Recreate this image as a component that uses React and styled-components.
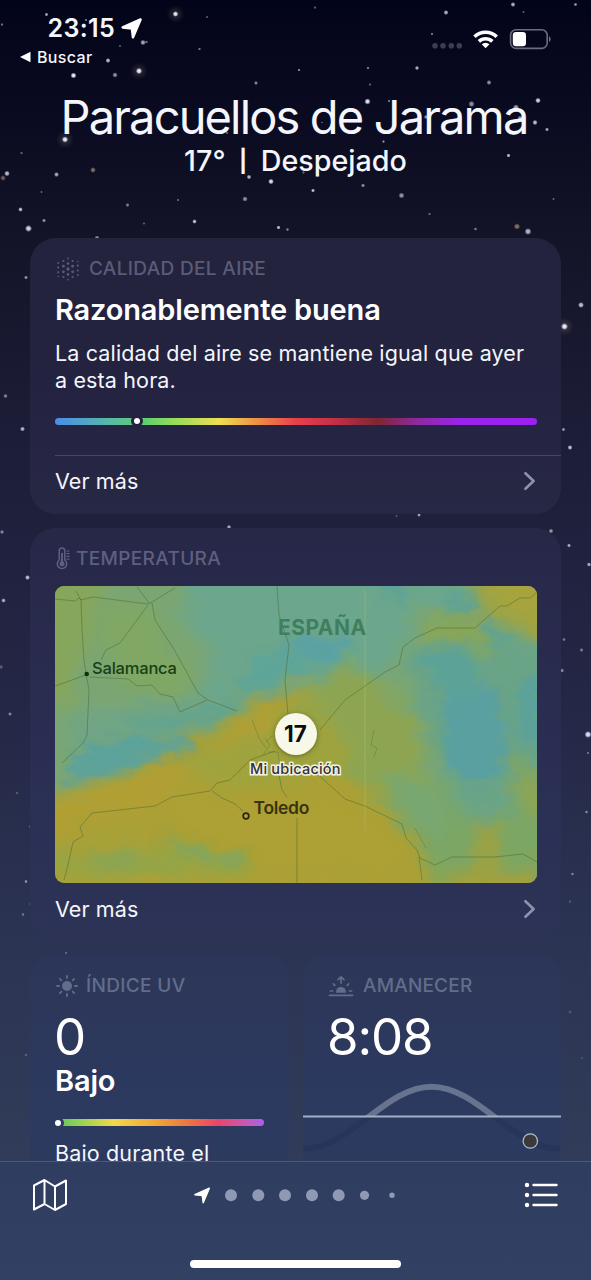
import React from "react";
import styled, { createGlobalStyle } from "styled-components";

const GlobalStyle = createGlobalStyle`
  * { box-sizing: border-box; }
  body { margin: 0; background: #30405f; }
`;

const Screen = styled.div`
  position: relative;
  display: flex;
  flex-direction: column;
  width: 591px;
  height: 1280px;
  overflow: hidden;
  font-family: Inter, sans-serif;
  color: #f4f6fc;
  background: linear-gradient(180deg, #02041a 0, #0a0b20 120px, #131428 238px, #1a1b33 380px, #1f203c 520px, #242745 700px, #2a3150 880px, #2e3856 1040px, #303c59 1160px);
`;

const Sky = styled.svg`
  position: absolute;
  inset: 0;
`;

const StatusBar = styled.header`
  position: relative;
  display: flex;
  justify-content: space-between;
  height: 90px;
  padding: 14px 40px 0 20px;
`;

const StatusLeft = styled.div`
  display: flex;
  flex-direction: column;
`;

const Time = styled.div`
  display: flex;
  align-items: center;
  gap: 6px;
  height: 28px;
  padding-left: 27.5px;
  font-size: 25px;
  font-weight: 600;
  letter-spacing: 0.35px;
`;

const BackLink = styled.div`
  display: flex;
  align-items: center;
  gap: 6px;
  height: 29px;
  font-size: 16px;
  font-weight: 500;
  letter-spacing: 0.35px;
`;

const StatusRight = styled.div`
  display: flex;
  align-items: center;
  height: 50px;
`;

const Hero = styled.section`
  position: relative;
  display: flex;
  flex-direction: column;
  align-items: center;
  height: 148px;
  white-space: nowrap;
`;

const City = styled.h1`
  margin: -1px 0 0;
  padding-right: 3px;
  font-size: 47px;
  font-weight: 400;
  line-height: 56px;
  letter-spacing: -1.85px;
`;

const Conditions = styled.div`
  display: flex;
  align-items: center;
  gap: 13.5px;
  font-size: 28.7px;
  font-weight: 500;
  line-height: 32px;
`;

const Divider = styled.span`
  font-size: 22px;
  font-weight: 700;
`;

const Cards = styled.main`
  position: relative;
  display: flex;
  flex-direction: column;
  gap: 14px;
  height: 924px;
  padding: 0 30px;
  overflow: hidden;
`;

const Card = styled.section`
  display: flex;
  flex-direction: column;
  flex: none;
  height: ${(p) => p.$height};
  padding: 0 25px;
  border-radius: 26px;
  background: ${(p) => p.$fill};
  white-space: nowrap;
  overflow: hidden;
`;

const Pair = styled.div`
  display: grid;
  grid-template-columns: 259px 258px;
  gap: 14px;
`;

const Label = styled.div`
  display: flex;
  align-items: center;
  gap: ${(p) => p.$gap || "9px"};
  height: 24px;
  margin-top: 19px;
  font-size: 19px;
  font-weight: 500;
  letter-spacing: ${(p) => p.$track || "0.35px"};
  color: ${(p) => p.$tone || "#5a5c77"};
`;

const Headline = styled.h2`
  margin: ${(p) => p.$margin || "0"};
  font-size: 29px;
  font-weight: 600;
  line-height: 36px;
  letter-spacing: -0.17px;
  color: #fff;
`;

const Body = styled.p`
  margin: ${(p) => p.$margin};
  font-size: 21.5px;
  line-height: 27.3px;
  letter-spacing: 0.14px;
`;

const Reading = styled.div`
  font-size: 51px;
  font-weight: 400;
  line-height: 60px;
  margin-top: 9px;
  margin-left: -1px;
  letter-spacing: -1.1px;
  color: #fff;
`;

const Scale = styled.div`
  display: flex;
  align-items: center;
  flex: none;
  width: ${(p) => p.$width};
  height: 7px;
  margin-top: ${(p) => p.$top};
  padding-left: ${(p) => p.$offset};
  border-radius: 4px;
  background: ${(p) => p.$ramp};
`;

const ScaleDot = styled.i`
  width: 12px;
  height: 12px;
  margin-left: ${(p) => p.$shift || "0"};
  border: 3px solid ${(p) => p.$ring};
  border-radius: 50%;
  background: #fff;
`;

const More = styled.div`
  display: flex;
  align-items: center;
  justify-content: space-between;
  height: 52px;
  margin-top: ${(p) => p.$top || "0"};
  margin-right: -25px;
  padding-right: 25px;
  border-top: ${(p) => (p.$line ? "1px solid #454660" : "0")};
  font-size: 21.5px;
  letter-spacing: 0.1px;
`;

const MapView = styled.div`
  position: relative;
  flex: none;
  width: 482px;
  height: 297px;
  margin-top: 15px;
  border-radius: 9px;
  overflow: hidden;
`;

const MapLabel = styled.span`
  position: absolute;
  left: ${(p) => p.$x}px;
  top: ${(p) => p.$y}px;
  font-size: ${(p) => p.$size}px;
  font-weight: ${(p) => p.$weight || 500};
  line-height: 20px;
  letter-spacing: ${(p) => p.$track || 0}px;
  color: ${(p) => p.$color};
`;

const LocationLabel = styled(MapLabel)`
  -webkit-text-stroke: 3px #f3f1e0;
  paint-order: stroke fill;
`;

const LocationPin = styled.div`
  position: absolute;
  left: 219.5px;
  top: 127.5px;
  width: 42px;
  height: 42px;
  border-radius: 50%;
  background: #f7f7ea;
  color: #0c0c0c;
  font-size: 22.5px;
  font-weight: 700;
  line-height: 42px;
  text-align: center;
  letter-spacing: 0;
  box-shadow: 0 1px 5px rgba(60, 70, 10, 0.6);
`;

const SunPath = styled.svg`
  display: block;
  flex: none;
  margin: 9px 0 0 -25px;
`;

const TabBar = styled.footer`
  position: relative;
  display: flex;
  flex-direction: column;
  height: 119px;
  border-top: 1px solid #4b5a7c;
  background: linear-gradient(180deg, #2f3d61, #324063);
`;

const TabRow = styled.div`
  display: flex;
  align-items: center;
  justify-content: space-between;
  height: 66px;
  padding: 0 33px 0 32px;
`;

const HomeIndicator = styled.div`
  width: 211px;
  height: 8px;
  margin: 32px auto 0;
  border-radius: 4px;
  background: #fff;
`;

const stars = [
  [46.5,14.5,1.2,.7],[175.5,14,1.8,1,1],[2,24.5,1,.5],[207,17,.8,.4],[86,20,1,.5],[143,42.5,1.8,.7],[146.5,42,1,.5],[120,46,.8,.4],[199.5,49,1,.5],[108,60.5,1.6,.8],[139,71,2,1,1],[73.5,75.5,1.9,1],[115,75,1.7,.6],[299,70,1,.6],[256,83,1.3,.6],
  [65,139.5,2,1,1],[21.5,153,1,.4],[7,173.5,1.8,.8],[3,178,1.8,.5,2],[56.5,174.5,1.6,.7],[93,170,1.8,.6,2],[41.5,192,.9,.4],[20.5,209.5,1.5,.8],[44,220.5,1.3,.6],[28.5,228.5,2.2,.9],[127.5,205,1.3,.5],[178,200,.9,.4],[144,223.5,.9,.4],[194.5,221.5,1.5,.8],[249,177,1.5,.8],[271,181.5,1.8,.95],[245,199,1.7,.6],[278.5,227.5,1.3,.8],[287.5,229.5,1.1,.5],[227,133,1,.4],
  [315,7.5,1,.4],[446,12.5,1.6,.75],[513,4.5,1.6,.75],[523.5,12,.9,.4],[575.5,4.5,1.2,.6],[432,34,1,.5],[368,68,1.1,.5],[417,68,1.4,.75],[370,84.5,1,.4],[489,82.5,1.6,.6],[367.5,101.5,2,.95],[389,101,1,.5],[471.5,104,2,.6],[538,100.5,1.8,.9],[516,107.5,2,.7],[520,118,1.6,.6],[426,117,1.4,.6],[535,122.5,1.7,.8],[547,129.5,1.3,.7],[322,122.5,.7,.4],[383.5,141.5,1,.6],[508.5,155.5,1.3,.8],[303.5,172.5,1,.4],[313,190.5,1.3,.8],[363,185.5,1.3,.6],[401.5,195.5,1.9,.6],[429.5,214,1,.4],[475.5,229,1.1,.5],[517,226.5,2,.6,2],[528,231.5,2.2,.75],[553.5,199,.9,.4],
  [97,238,1.6,.6],[26,277.5,1.3,.6],[5.5,396,1.4,.5],[22.5,429,1.6,.75],[581,305,1.9,.8],[564.5,326.5,2.2,1,1],[563.5,429.5,1.2,.6],[570,447.5,1.6,.8],[396.5,516,.9,.3],[419,515,1.2,.7],[229,527,1.4,.7],[2,532,1.4,.5],[27.5,577.5,1.6,.8],[3.5,600.5,1.5,.7],[1,667,1.4,.3],[10,714,1.3,.5],[551,531,1.5,.6],[569,545.5,1.3,.7],[589,564.5,1.4,.7],[564,639.5,1.2,.4],[581.5,650,1.3,.45],[562,670.5,1.4,.5],[588,734.5,2.2,.95],[588,753,1,.4],[586.5,812,1.1,.5],[572.5,874,1.1,.45],[570,901.5,1,.25],[17,793,1.1,.25],[30,826.5,1,.3],[26,881.5,1.1,.6],[30,904,1,.2],[23,914.5,1.1,.4],[66,953,1,.3],[26,1055,1.1,.25],[570,1012,1.2,.2],[582,1058,1.1,.15],
];

const Stars = () => (
  <Sky width="591" height="1280" viewBox="0 0 591 1280">
    <defs>
      <radialGradient id="glow">
        <stop offset="0" stopColor="#a08c78" stopOpacity=".28" />
        <stop offset="1" stopColor="#a08c78" stopOpacity="0" />
      </radialGradient>
      <radialGradient id="star">
        <stop offset="0" stopColor="#fff" />
        <stop offset=".5" stopColor="#e6eaff" stopOpacity=".85" />
        <stop offset="1" stopColor="#cdd4f5" stopOpacity="0" />
      </radialGradient>
      <radialGradient id="warmStar">
        <stop offset="0" stopColor="#e0b49a" />
        <stop offset=".5" stopColor="#e0b49a" stopOpacity=".8" />
        <stop offset="1" stopColor="#e0b49a" stopOpacity="0" />
      </radialGradient>
    </defs>
    {stars.map(([x, y, r, o, kind], i) => (
      <g key={i}>
        {kind === 1 && <circle cx={x} cy={y} r="9" fill="url(#glow)" />}
        <circle cx={x} cy={y} r={r * 1.6} opacity={o} fill={kind === 2 ? "url(#warmStar)" : "url(#star)"} />
      </g>
    ))}
  </Sky>
);

const ARROW = "M18.6 1.4 11.4 18.4 10.4 9.9 1.6 9Z";

const Arrow = () => (
  <svg width="21" height="21" viewBox="0 0 20 20">
    <path d={ARROW} fill="#fff" stroke="#fff" strokeWidth="2.4" strokeLinejoin="round" />
  </svg>
);

const StatusIcons = () => (
  <svg width="120" height="22" viewBox="431 28 120 22">
    {[435, 443, 451.3, 459.3].map((x) => (
      <circle key={x} cx={x} cy="45.8" r="2.8" fill="#3c3d52" />
    ))}
    <g fill="none" stroke="#fff" strokeWidth="3.6">
      <path d="M474.5 36.8a16 16 0 0 1 22.2 0" />
      <path d="M478.9 41.4a9.7 9.7 0 0 1 13.4 0" />
    </g>
    <path d="M485.6 48.3 481.7 44.3a5.6 5.6 0 0 1 7.8 0Z" fill="#fff" />
    <rect x="510.6" y="29.8" width="36.6" height="18.6" rx="5.5" fill="none" stroke="#6b6c7d" strokeWidth="1.6" />
    <path d="M549 36.2c2.2.8 2.2 5 0 5.8Z" fill="#6b6c7d" />
    <rect x="512.8" y="32" width="13.2" height="14.2" rx="3.2" fill="#fff" />
  </svg>
);

const Chevron = () => (
  <svg width="13" height="20" viewBox="0 0 13 20">
    <path d="M2.4 2.2 10.6 10 2.4 17.8" fill="none" stroke="#8f92ad" strokeWidth="2.6" strokeLinecap="round" strokeLinejoin="round" />
  </svg>
);

const airDots = [
  [12, [[-10.6, 0.9], [-5.4, 1.3], [0, 1.7], [5.4, 1.3], [10.6, 0.9]]],
  [7.4, [[-8, 1.1], [-2.8, 1.4], [2.8, 1.4], [8, 1.1]]],
  [16.6, [[-8, 1.1], [-2.8, 1.4], [2.8, 1.4], [8, 1.1]]],
  [2.2, [[-6, 0.9], [-1.5, 1.1], [3.3, 1.1], [7.5, 0.8]]],
  [21.8, [[-7.5, 0.8], [-3.3, 1.1], [1.5, 1.1], [6, 0.9]]],
];
const AirIcon = () => (
  <svg width="25" height="24" viewBox="-1 0 25 24" fill="currentColor">
    {airDots.flatMap(([x, col]) => col.map(([dy, r]) => <circle key={`${x},${dy}`} cx={x} cy={12 + dy} r={r} />))}
  </svg>
);

const ThermoIcon = () => (
  <svg width="16" height="23" viewBox="0 0 16 23" fill="none" stroke="currentColor" strokeWidth="1.5">
    <path d="M4.2 13V3.9a2.8 2.8 0 0 1 5.6 0v9.1a4.7 4.7 0 1 1-5.6 0Z" />
    <path d="M7 6v10" strokeWidth="1.9" />
    <circle cx="7" cy="16.8" r="2.5" fill="currentColor" stroke="none" />
    <path d="M11.5 4h3M11.5 6.7h3M11.5 9.4h3M11.5 12.1h3" strokeWidth="1.2" />
  </svg>
);

const SunIcon = () => (
  <svg width="24" height="24" viewBox="-12 -12 24 24" stroke="currentColor" strokeWidth="1.8" strokeLinecap="round">
    <circle r="5" fill="currentColor" stroke="none" />
    {[0, 45, 90, 135, 180, 225, 270, 315].map((a) => (
      <path key={a} d="M0-8V-10" transform={`rotate(${a})`} />
    ))}
  </svg>
);

const SunriseIcon = () => (
  <svg width="26" height="24" viewBox="0 0 26 24" fill="none" stroke="currentColor" strokeWidth="1.7" strokeLinecap="round" strokeLinejoin="round">
    <path d="M1.6 21.4h23" strokeWidth="1.9" />
    <path d="M8.1 18.7v-.9a4.9 4.9 0 0 1 9.8 0v.9Z" fill="currentColor" stroke="none" />
    <path d="M13 9V3.3M10 5.6l3-2.7 3 2.7M6.8 11.3 5.4 9.9M19.2 11.3l1.4-1.4M4.6 17H2.4M21.4 17h2.2" />
  </svg>
);

/* Temperature bands, painted in order; units are thirds of a pixel. */
const bands = [
  ["#7ba673", "-60-60H1560V1000H1180L1100 760 1010 650 930 520 900 420 830 330 740 320 640 370 560 410 480 450 380 500 250 570 60 650-60 660Z"],
  ["#86a65c", "-60-60H120L160 60 110 200 60 380-60 420Z"],
  ["#80a763", "160 100 300 90 340 200 420 330 330 370 200 300 150 210Z"],
  ["#6ca68c", "420-60H1240L1220 120 1060 200 1000 280 880 300 700 330 560 390 420 400 500 260 400 120Z"],
  ["#70a585", "60 420 300 380 520 380 500 440 300 510 60 580Z"],
  ["#8da552", "760 330 900 270 1000 330 1080 400 1130 500 1130 660 1090 760 1000 690 900 620 800 520 740 430Z"],
  ["#6aa487", "1060 230 1250 180 1500 210V700L1260 740 1180 620 1130 480 1090 360Z"],
  ["#7ca663", "1080 600 1180 640 1250 740 1500 700V960H1160L1100 800 1020 720Z"],
  ["#78a772", "980 600 1080 590 1200 700 1180 800 1060 720Z"],
  ["#8ba655", "1080 130 1230 110 1330 200 1340 240 1230 190 1100 200Z"],
  ["#a0a442", "1250 20 1560-40V200L1420 190 1370 130 1270 150 1310 80Z"],
  ["#a8a43c", "1330 20 1470 20V130L1380 90Z"],
  ["#93a548", "560 900 0 900 0 830 150 860 320 820 620 850Z"],
  ["#b19f34", "-40 680 60 645 250 590 420 545 540 480 560 440 660 370 760 360 700 430 620 470 540 560 380 610 320 700 160 720-40 800Z"],
  ["#9fa33e", "380 540 540 510 640 480 700 400 860 440 900 560 720 620 500 640 440 600Z"],
  ["#ada034", "330 660 600 650 900 680 1050 780 1080 880 640 880 420 780Z"],
  ["#89a554", "120 830 210 810 300 850 250 890 120 890Z"],
  ["#a5a03a", "1285 730 1340 740 1345 900 1460 870V960H1180V900L1300 880Z"],
  ["#8ca553", "1380 540 1500 640V720L1400 700Z"],
];
const cool = [
  ["#57a1ab", "730 190 890 185 890 230 830 270 740 265 690 250Z"],
  ["#5ba59c", "600 260 700 210 830 260 700 300 660 350 560 380Z"],
  ["#5ca497", "240 430 380 420 560 385 550 420 440 440 380 460 250 450Z"],
  ["#56a2a4", "80 540 220 490 400 480 440 520 300 560 130 610 50 630Z"],
  ["#569fa8", "1180 350 1330 330 1370 460 1350 600 1260 640 1190 560Z"],
  ["#5aa29c", "1100 240 1240 210 1290 320 1250 380 1160 330Z"],
  ["#5ba29b", "1200 60 1280 50 1270 120 1210 120ZM1300 130 1350 150 1380 230 1310 200ZM1000 30 1080 40 1060 80 990 70Z"],
  ["#58a1a0", "1410 330 1470 300V550L1400 480Z"],
  ["#7ba767", "320 790 440 800 500 840 580 830 600 870 480 860 380 830Z"],
];

const Terrain = () => (
  <svg width="482" height="297" viewBox="55 586 482 297">
    <defs>
      <filter id="soften" x="-5%" y="-5%" width="110%" height="110%" colorInterpolationFilters="sRGB">
        <feGaussianBlur stdDeviation="8" result="b" />
        <feTurbulence type="fractalNoise" baseFrequency=".03 .05" numOctaves="4" seed="8" result="n" />
        <feDisplacementMap in="b" in2="n" scale="26" xChannelSelector="R" yChannelSelector="G" />
      </filter>
      <filter id="wisp" x="-5%" y="-10%" width="110%" height="120%" colorInterpolationFilters="sRGB">
        <feGaussianBlur stdDeviation="4.5" result="b" />
        <feTurbulence type="fractalNoise" baseFrequency=".05 .09" numOctaves="4" seed="3" result="n" />
        <feDisplacementMap in="b" in2="n" scale="26" xChannelSelector="R" yChannelSelector="G" />
      </filter>
    </defs>
    <rect x="55" y="586" width="482" height="297" fill="#aaa136" />
    <g filter="url(#soften)">
      <g transform="translate(50 575) scale(.33333)">
        {bands.map(([c, d], i) => <path key={i} d={`M${d}`} fill={c} />)}
      </g>
    </g>
    <g filter="url(#wisp)" opacity=".78">
      <g transform="translate(50 575) scale(.33333)">
        {cool.map(([c, d], i) => <path key={i} d={`M${d}`} fill={c} />)}
      </g>
    </g>
    <g fill="none" stroke="#4c6a35" strokeOpacity=".5" strokeWidth="1" strokeLinejoin="round">
      <path d="M55 599 75 601 79 598 81 600 93 597 148 604 152 602 175 588M137 587 149 603M76 591 81 600M148 605 120 643 106 650 101 660M152 603 155 620 175 651 198 693 208 700 237 711" />
      <path d="M81 600 82 630 84 660 86 674 89 690 87 735 83 743 62 763M55 686 86 675M90 677 128 679 137 686 152 685 160 694 173 697 180 712 207 700" />
      <path d="M277 586 279 615 289 645 285 680 288 715M320 730 345 700 385 672 399 665 403 647 415 638 437 628 475 628 500 606 507 606 520 598 530 598 537 592" />
      <path d="M64 880 68 865 73 842 83 836 80 827 92 813 155 806 172 797 210 791 217 783 230 780 250 760 275 751M212 791 222 798 235 804 243 811M279 775 282 790 287 797M297 818V883" />
      <path d="M315 772 345 799 365 806 402 824 406 838 417 850 420 858 435 865 452 857 495 857 523 854 537 862M419 857 422 880" />
      <path d="M252 720 259 738 266 748M265 738 270 745 263 755M266 742 272 736M268 752 278 752 281 775M415 828 426 848M374 730 371 745 377 748 374 757" strokeOpacity=".35" />
    </g>
    <path d="M365 590V830" stroke="#b5c37a" strokeOpacity=".4" />
    <circle cx="86.7" cy="674" r="2.3" fill="#0e3509" />
    <circle cx="246" cy="816" r="2.8" fill="#b3a83c" stroke="#2c270a" strokeWidth="1.8" />
  </svg>
);

const DaylightCurve = () => (
  <SunPath width="258" height="76" viewBox="303 1076 258 76">
    <defs>
      <clipPath id="day"><rect x="303" y="1076" width="258" height="41" /></clipPath>
      <clipPath id="night"><rect x="303" y="1117" width="258" height="34.5" /></clipPath>
    </defs>
    <path clipPath="url(#night)" d="M303 1149c47 0 82-62.3 128.5-62.3s82 62.3 128.5 62.3" fill="none" stroke="#26365a" strokeWidth="6" />
    <path clipPath="url(#day)" d="M303 1149c47 0 82-62.3 128.5-62.3s82 62.3 128.5 62.3" fill="none" stroke="#67738f" strokeWidth="6" />
    <path d="M303 1116.5H561" stroke="#a3aec5" strokeWidth="1.8" />
    <circle cx="530.3" cy="1141" r="7.2" fill="#3a3a3c" stroke="#b9bfca" strokeWidth="1.2" />
  </SunPath>
);

const MapIcon = () => (
  <svg width="36" height="34" viewBox="0 0 36 34" fill="none" stroke="#fff" strokeWidth="2" strokeLinejoin="round">
    <path d="M2 7.5 12.5 2 23 8.5 34 2.5V26L23 32 12.5 26 2 31.5ZM12.5 2V26M23 8.5V32" />
  </svg>
);

const PageDots = styled.svg`
  margin-left: -2px;
`;

const Pages = () => (
  <PageDots width="206" height="18" viewBox="192 1186 206 18">
    <svg x="193.5" y="1187" width="17" height="17" viewBox="0 0 20 20">
      <path d={ARROW} fill="#fff" stroke="#fff" strokeWidth="1.8" strokeLinejoin="round" />
    </svg>
    {[[231, 6], [258.3, 6], [285, 6], [312, 6], [338.7, 6], [364.5, 4.6], [392, 2.7]].map(([x, r]) => (
      <circle key={x} cx={x} cy="1195.3" r={r} fill="#8f99b3" />
    ))}
  </PageDots>
);

const ListIcon = () => (
  <svg width="34" height="26" viewBox="524 1182.5 34 26">
    {[1185.5, 1195.5, 1205.5].map((y) => (
      <g key={y}>
        <circle cx="527" cy={y} r="2.2" fill="#fff" />
        <path d={`M533.5 ${y}H556.5`} stroke="#fff" strokeWidth="2.4" strokeLinecap="round" />
      </g>
    ))}
  </svg>
);

export default function App() {
  return (
    <Screen>
      <GlobalStyle />
      <Stars />
      <StatusBar>
        <StatusLeft>
          <Time>23:15 <Arrow /></Time>
          <BackLink>
            <svg width="11" height="12" viewBox="0 0 11 12"><path d="M0 6 10.5 .8V11.2Z" fill="#fff" /></svg>
            Buscar
          </BackLink>
        </StatusLeft>
        <StatusRight><StatusIcons /></StatusRight>
      </StatusBar>
      <Hero>
        <City>Paracuellos de Jarama</City>
        <Conditions>17° <Divider>|</Divider> Despejado</Conditions>
      </Hero>
      <Cards>
        <Card $height="276px" $fill="linear-gradient(180deg, #24233d, #232341 50%, #272844)">
          <Label><AirIcon />CALIDAD DEL AIRE</Label>
          <Headline $margin="11px 0 0">Razonablemente buena</Headline>
          <Body $margin="12px 0 0">La calidad del aire se mantiene igual que ayer<br />a esta hora.</Body>
          <Scale
            $width="482px" $top="23.4px" $offset="76px"
            $ramp="linear-gradient(90deg, #4a8de8 0, #55b9a8 11%, #62cf6e 19%, #8fdc5a 24%, #eedf53 34%, #ee8f45 42%, #e93f4c 50%, #c93248 57%, #7e2533 67%, #8d2aa0 75%, #9a24ec 84%, #9d20f0 100%)"
          >
            <ScaleDot $ring="#232341" />
          </Scale>
          <More $line $top="30px">Ver más<Chevron /></More>
        </Card>
        <Card $height="413px" $fill="linear-gradient(180deg, #272848, #2a2c50 40%, #2b3156 75%, #2c3355)">
          <Label $gap="5px" $tone="#5d6081"><ThermoIcon />TEMPERATURA</Label>
          <MapView>
            <Terrain />
            <MapLabel $x={223} $y={32} $size={21} $weight={700} $track={0.5} $color="#3f7f5f">ESPAÑA</MapLabel>
            <MapLabel $x={37} $y={72} $size={16.5} $track={-0.2} $color="#173f14">Salamanca</MapLabel>
            <MapLabel $x={198.5} $y={212} $size={17.5} $weight={600} $track={-0.3} $color="#393310">Toledo</MapLabel>
            <LocationLabel $x={195} $y={173} $size={14.5} $track={0.2} $color="#33323a">Mi ubicación</LocationLabel>
            <LocationPin>17</LocationPin>
          </MapView>
          <More>Ver más<Chevron /></More>
        </Card>
        <Pair>
          <Card $height="260px" $fill="linear-gradient(180deg, #2c3658, #2c3a60 60%)">
            <Label $gap="7px" $tone="#626d8b"><SunIcon />ÍNDICE UV</Label>
            <Reading>0</Reading>
            <Headline $margin="-4px 0 0">Bajo</Headline>
            <Scale $width="209px" $top="20.5px" $offset="0" $ramp="linear-gradient(90deg, #5fc454 0, #7fcf56 8%, #f1d84e 28%, #f0a63a 48%, #ef7442 64%, #e9456a 78%, #c858b8 92%, #a860ec 100%)">
              <ScaleDot $ring="#2c3a60" $shift="-3px" />
            </Scale>
            <Body $margin="14px 0 0">Bajo durante el</Body>
          </Card>
          <Card $height="260px" $fill="linear-gradient(180deg, #2c3658, #2c3a60 60%)">
            <Label $gap="9px" $track="0.2px" $tone="#626d8b"><SunriseIcon />AMANECER</Label>
            <Reading>8:08</Reading>
            <DaylightCurve />
          </Card>
        </Pair>
      </Cards>
      <TabBar>
        <TabRow><MapIcon /><Pages /><ListIcon /></TabRow>
        <HomeIndicator />
      </TabBar>
    </Screen>
  );
}
